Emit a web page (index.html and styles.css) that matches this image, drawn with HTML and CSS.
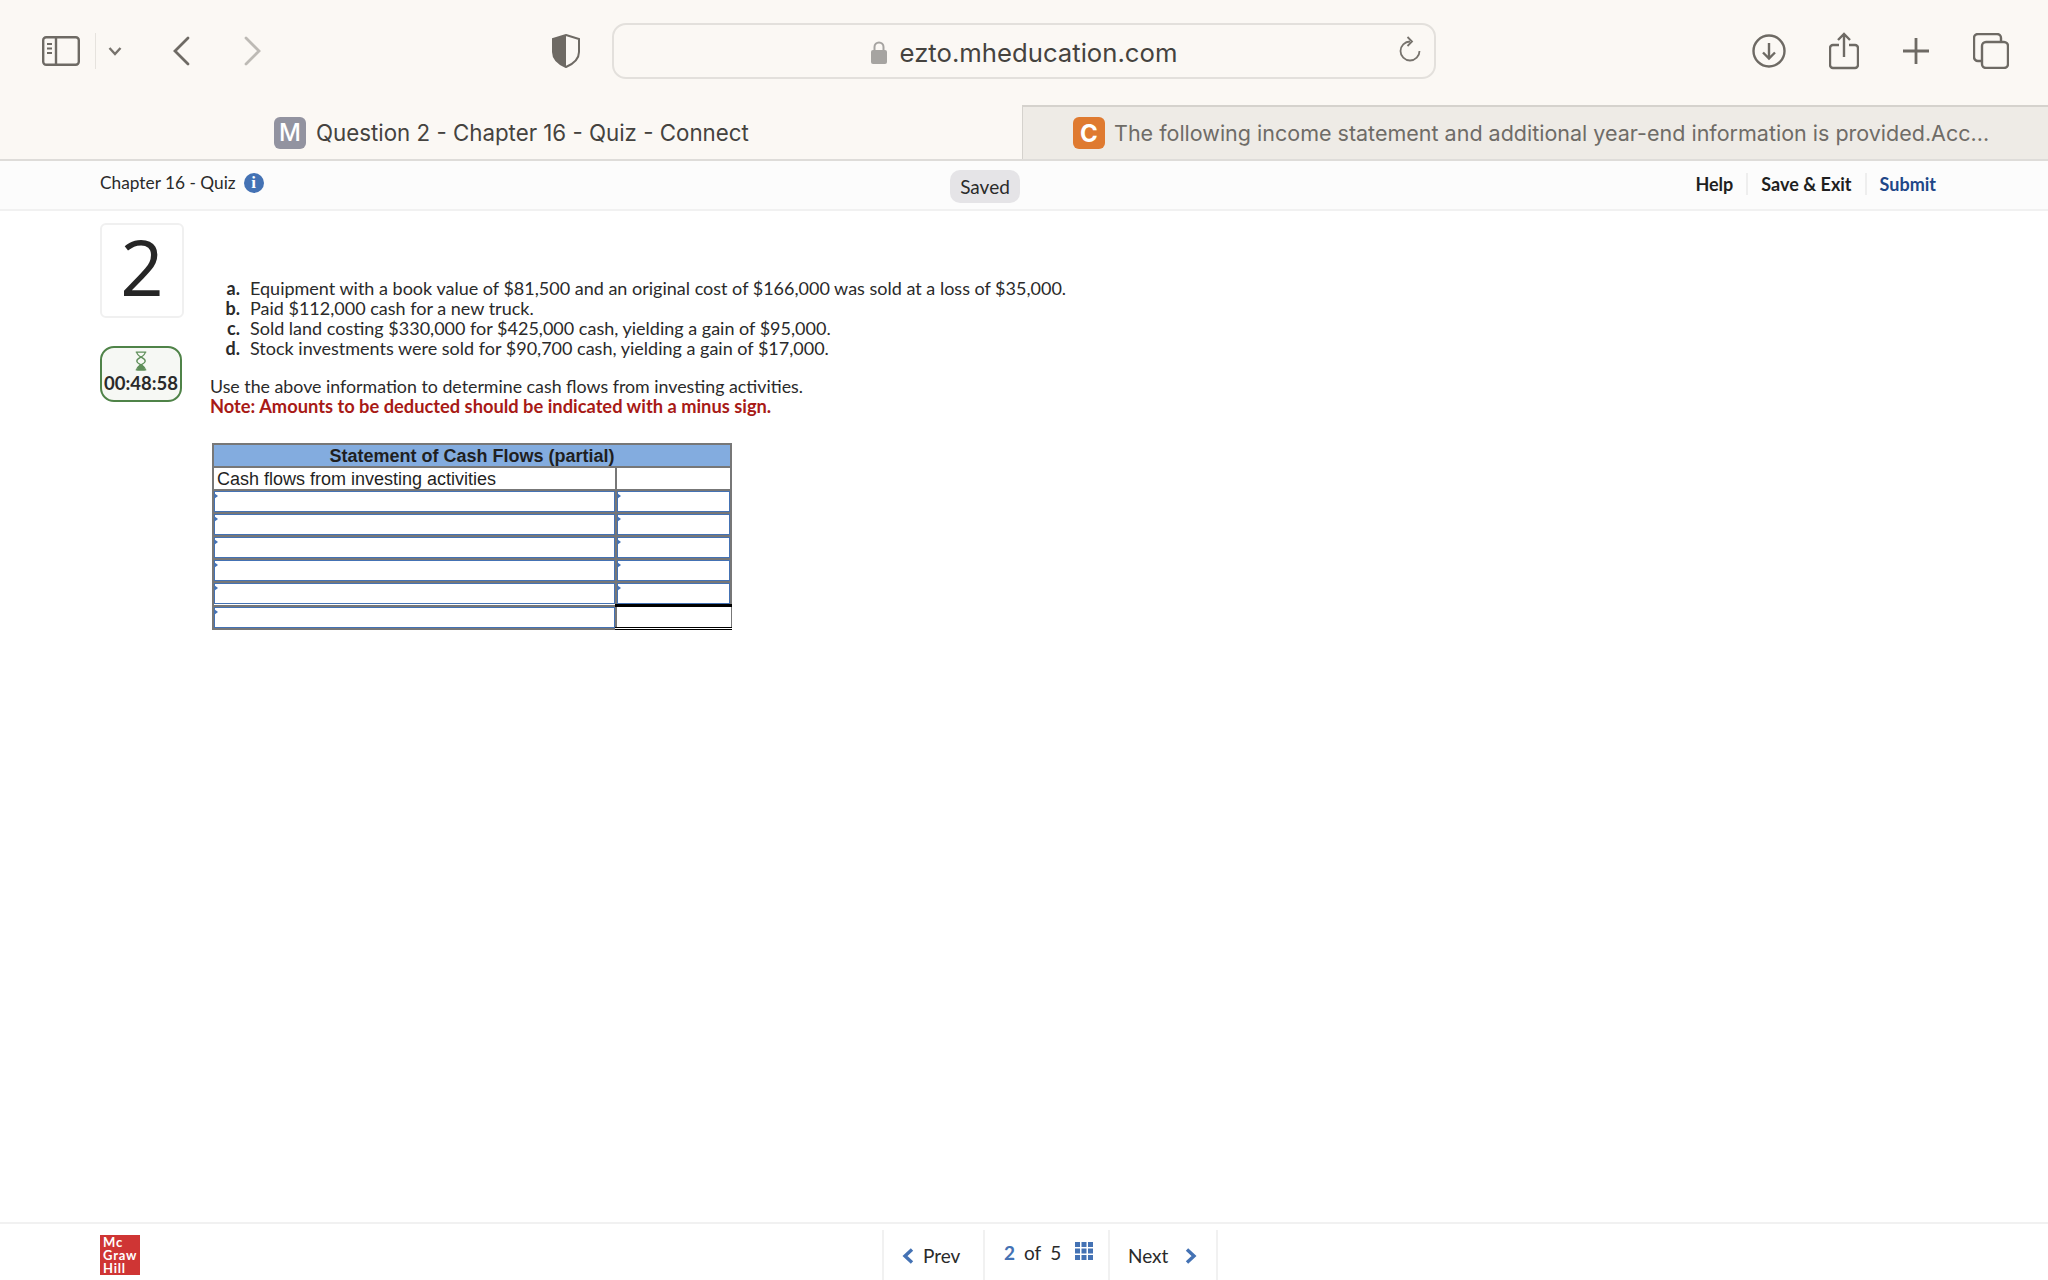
FILE: index.html
```html
<!DOCTYPE html>
<html lang="en">
<head>
  <meta charset="UTF-8">
  <title>Question 2 - Chapter 16 - Quiz - Connect</title>
  <link rel="stylesheet" href="styles.css">
</head>
<body>
  <!-- Browser toolbar -->
  <div class="toolbar">
    <svg class="ico-sidebar" width="38" height="30" viewBox="0 0 38 30" fill="none" stroke="#6e6a64" stroke-width="2.4"><rect x="1.2" y="1.2" width="35.6" height="27.6" rx="3"/><path d="M14 1v28"/><path d="M5 8h5M5 12.500h5M5 17h5" stroke-width="1.800"/></svg>
    <span class="tool-divider"></span>
    <svg class="ico-caret" width="14" height="10" viewBox="0 0 14 10" fill="none" stroke="#77736d" stroke-width="2.400"><path d="M1.500 2 7 8l5.500-6"/></svg>
    <svg class="ico-back" width="18" height="30" viewBox="0 0 18 30" fill="none" stroke="#6e6a64" stroke-width="2.800" stroke-linecap="round"><path d="M16 2 3 15l13 13"/></svg>
    <svg class="ico-forward" width="18" height="30" viewBox="0 0 18 30" fill="none" stroke="#bdbab5" stroke-width="2.800" stroke-linecap="round"><path d="M2 2l13 13L2 28"/></svg>
    <svg class="ico-shield" width="28" height="34" viewBox="0 0 28 34"><path d="M14 1 27 5v13c0 7-6 12-13 15C7 30 1 25 1 18V5z" fill="#fbf8f4" stroke="#6e6a64" stroke-width="2"/><path d="M14 1 1 5v13c0 7 6 12 13 15z" fill="#6e6a64"/></svg>
    <div class="address-bar">
      <svg class="ico-lock" width="16" height="23" viewBox="0 0 16 23"><path d="M3.500 10V6a4.500 4.500 0 0 1 9 0v4" fill="none" stroke="#a6a4a1" stroke-width="2"/><rect y="9" width="16" height="14" rx="2" fill="#a6a4a1"/></svg>
      <span class="address-text">ezto.mheducation.com</span>
      <svg class="ico-reload" width="22" height="26" viewBox="0 0 22 26" fill="none" stroke="#77736d" stroke-width="1.800"><path d="M11 5.500A9.500 9.500 0 1 0 20.500 15"/><path d="M8.500 1 13 5.500 8.500 10"/></svg>
    </div>
    <div class="tool-right">
      <svg width="34" height="34" viewBox="0 0 34 34" fill="none" stroke="#6e6a64" stroke-width="2.400"><circle cx="17" cy="17" r="15.500"/><path d="M17 9v15M11 18.500l6 6 6-6"/></svg>
      <svg width="30" height="38" viewBox="0 0 30 38" fill="none" stroke="#6e6a64" stroke-width="2.400"><path d="M10 13H4a3 3 0 0 0-3 3v17a3 3 0 0 0 3 3h22a3 3 0 0 0 3-3V16a3 3 0 0 0-3-3h-6"/><path d="M15 25V2M9 8l6-6 6 6"/></svg>
      <svg width="28" height="28" viewBox="0 0 28 28" fill="none" stroke="#6e6a64" stroke-width="2.800"><path d="M14 1v26M1 14h26"/></svg>
      <svg width="36" height="36" viewBox="0 0 36 36" fill="none" stroke="#6e6a64" stroke-width="2.400"><path d="M9 28H5a4 4 0 0 1-4-4V5a4 4 0 0 1 4-4h19a4 4 0 0 1 4 4v4"/><rect x="9" y="9" width="26" height="26" rx="4"/></svg>
    </div>
  </div>

  <!-- Tabs -->
  <div class="tabs">
    <div class="tab tab-active">
      <span class="favicon favicon-m">M</span>
      <span>Question 2 - Chapter 16 - Quiz - Connect</span>
    </div>
    <div class="tab tab-other">
      <span class="favicon favicon-c">C</span>
      <span>The following income statement and additional year-end information is provided.Acc...</span>
    </div>
  </div>

  <!-- Quiz header -->
  <div class="quiz-header">
    <div class="quiz-title">
      <span>Chapter 16 - Quiz</span>
      <span class="info-dot">i</span>
    </div>
    <span class="saved">Saved</span>
    <div class="quiz-links">
      <a>Help</a>
      <a>Save &amp; Exit</a>
      <a class="submit">Submit</a>
    </div>
  </div>

  <!-- Question -->
  <div class="main">
    <div class="side">
      <div class="q-number">2</div>
      <div class="timer">
        <svg width="14" height="20" viewBox="0 0 12 19" fill="none" stroke="#5f8f5a" stroke-width="1.200"><path d="M1 1h10M1 18h10M2 1c0 5 8 5 8 8.500S2 13 2 18M10 1c0 5-8 5-8 8.500S10 13 10 18"/><path d="M3 18c0-3 2-4 3-5 1 1 3 2 3 5z" fill="#5f8f5a"/></svg>
        <span>00:48:58</span>
      </div>
    </div>
    <div class="question">
      <ol class="items">
        <li><b>a.</b><span>Equipment with a book value of $81,500 and an original cost of $166,000 was sold at a loss of $35,000.</span></li>
        <li><b>b.</b><span>Paid $112,000 cash for a new truck.</span></li>
        <li><b>c.</b><span>Sold land costing $330,000 for $425,000 cash, yielding a gain of $95,000.</span></li>
        <li><b>d.</b><span>Stock investments were sold for $90,700 cash, yielding a gain of $17,000.</span></li>
      </ol>
      <p class="prompt">Use the above information to determine cash flows from investing activities.</p>
      <p class="note">Note: Amounts to be deducted should be indicated with a minus sign.</p>

      <table class="cash-table">
        <colgroup><col class="col-label"><col></colgroup>
        <tr><th colspan="2">Statement of Cash Flows (partial)</th></tr>
        <tr><td class="label">Cash flows from investing activities</td><td></td></tr>
        <tr><td class="entry"><div></div></td><td class="entry"><div></div></td></tr>
        <tr><td class="entry"><div></div></td><td class="entry"><div></div></td></tr>
        <tr><td class="entry"><div></div></td><td class="entry"><div></div></td></tr>
        <tr><td class="entry"><div></div></td><td class="entry"><div></div></td></tr>
        <tr><td class="entry"><div></div></td><td class="entry"><div></div></td></tr>
        <tr><td class="entry"><div></div></td><td class="total"></td></tr>
      </table>
    </div>
  </div>

  <!-- Footer -->
  <div class="footer">
    <div class="logo">Mc<br>Graw<br>Hill</div>
    <div class="pager">
      <div class="pager-cell pager-prev">
        <svg width="12" height="16" viewBox="0 0 12 16" fill="none" stroke="#4472b4" stroke-width="3.400"><path d="M10 1.500 3 8l7 6.500"/></svg>
        <span>Prev</span>
      </div>
      <div class="pager-cell pager-count">
        <b>2</b><span>of</span><span>5</span>
        <svg width="18" height="18" viewBox="0 0 18 18" fill="#4472b4"><rect width="5" height="5"/><rect x="6.500" width="5" height="5"/><rect x="13" width="5" height="5"/><rect y="6.500" width="5" height="5"/><rect x="6.500" y="6.500" width="5" height="5"/><rect x="13" y="6.500" width="5" height="5"/><rect y="13" width="5" height="5"/><rect x="6.500" y="13" width="5" height="5"/><rect x="13" y="13" width="5" height="5"/></svg>
      </div>
      <div class="pager-cell pager-next">
        <span>Next</span>
        <svg width="12" height="16" viewBox="0 0 12 16" fill="none" stroke="#4472b4" stroke-width="3.400"><path d="M2 1.500 9 8l-7 6.500"/></svg>
      </div>
    </div>
  </div>
</body>
</html>
```

FILE: styles.css
```css
* {
  box-sizing: border-box;
}

html, body {
  margin: 0;
  padding: 0;
}

body {
  display: flex;
  flex-direction: column;
  width: 2048px;
  height: 1280px;
  overflow: hidden;
  background: #ffffff;
  color: #2a2a2a;
  font-family: Lato, "Open Sans", sans-serif;
}

/* Browser toolbar */
.toolbar {
  display: flex;
  align-items: center;
  height: 105px;
  padding: 0 39px 3px 42px;
  background: #fbf8f4;
}

.tool-divider {
  width: 1px;
  height: 36px;
  margin-left: 15px;
  background: #e6e3de;
}

.ico-caret {
  margin-left: 12px;
}

.ico-back {
  margin-left: 50px;
}

.ico-forward {
  margin-left: 54px;
}

.ico-shield {
  margin-left: 290px;
}

.address-bar {
  display: flex;
  align-items: center;
  position: relative;
  justify-content: center;
  width: 824px;
  height: 56px;
  margin-left: 32px;
  padding-top: 2px;
  border: 2px solid #e3e0dc;
  border-radius: 14px;
}

.ico-lock {
  margin-right: 13px;
}

.address-text {
  font-family: Inter, sans-serif;
  font-size: 25.700px;
  color: #45433f;
}

.ico-reload {
  position: absolute;
  right: 13px;
  top: 11px;
}

.tool-right {
  display: flex;
  align-items: center;
  gap: 43px;
  margin-left: auto;
}

/* Tabs */
.tabs {
  display: flex;
  height: 56px;
  font-family: Inter, sans-serif;
  font-size: 22.300px;
  white-space: nowrap;
  border-bottom: 2px solid #dedcd9;
}

.tab {
  display: flex;
  align-items: center;
  padding-top: 1px;
}

.tab-active {
  width: 1022px;
  padding-left: 274px;
  gap: 10px;
  background: #fbf8f4;
  color: #45433f;
}

.tab-other {
  flex: 1;
  padding-top: 0;
  padding-left: 50px;
  gap: 9px;
  background: #eeebe6;
  color: #6f6c67;
  font-size: 21.500px;
  border-top: 2px solid #d5d2cd;
  border-left: 1px solid #d5d2cd;
}

.favicon {
  display: flex;
  align-items: center;
  justify-content: center;
  width: 32px;
  height: 32px;
  border-radius: 6px;
  color: #ffffff;
  font-size: 24px;
  font-weight: 500;
}

.favicon-m {
  background: #9293a0;
}

.favicon-c {
  background: #df7a30;
  font-weight: 700;
}

/* Quiz header */
.quiz-header {
  display: flex;
  align-items: center;
  height: 50px;
  padding: 0 112px 0 100px;
  background: #fcfcfc;
  border-bottom: 2px solid #f1f1f1;
}

.quiz-title {
  display: flex;
  align-items: center;
  gap: 8px;
  width: 850px;
  margin-bottom: 5px;
  font-size: 17.300px;
  color: #2a2a2a;
}

.info-dot {
  display: flex;
  align-items: center;
  justify-content: center;
  width: 20px;
  height: 20px;
  border-radius: 50%;
  background: #4472b4;
  color: #ffffff;
  font-family: "Liberation Serif", serif;
  font-size: 17px;
  font-weight: 700;
}

.saved {
  width: 70px;
  height: 33px;
  margin-top: 2px;
  border-radius: 10px;
  background: #e5e4e7;
  font-size: 19px;
  line-height: 33px;
  text-align: center;
  color: #2a2a2a;
}

.quiz-links {
  display: flex;
  align-items: center;
  margin-left: auto;
  margin-bottom: 3px;
  font-size: 18px;
  font-weight: 700;
  color: #1f1f1f;
}

.quiz-links a {
  padding: 0 13px;
  line-height: 22px;
  border-right: 2px solid #eeeeee;
}

.quiz-links a.submit {
  padding-right: 0;
  border-right: none;
  color: #1f4788;
}

/* Question */
.main {
  display: flex;
  flex: 1;
  padding: 12px 0 0 100px;
}

.side {
  display: flex;
  flex-direction: column;
  width: 110px;
}

.q-number {
  width: 84px;
  height: 95px;
  border: 2px solid #f0f0f0;
  border-radius: 6px;
  font-family: "Open Sans", sans-serif;
  font-size: 76px;
  font-weight: 500;
  line-height: 84px;
  text-align: center;
  color: #262626;
}

.timer {
  display: flex;
  flex-direction: column;
  align-items: center;
  width: 82px;
  height: 56px;
  margin-top: 28px;
  padding-top: 3px;
  border: 2px solid #4f8348;
  border-radius: 14px;
  background: #f6f8f4;
  font-size: 18.500px;
  font-weight: 700;
  line-height: 24px;
  color: #2a2a2a;
}

.question {
  font-size: 18px;
  line-height: 20px;
  color: #2a2a2a;
}

.items {
  list-style: none;
  margin: 0;
  padding: 55px 0 0 0;
}

.items li {
  display: flex;
}

.items b {
  width: 30px;
  margin-right: 10px;
  text-align: right;
}

.prompt {
  margin: 18px 0 0 0;
  font-size: 17.800px;
}

.note {
  margin: 0;
  font-size: 18.300px;
  font-weight: 700;
  color: #a81a16;
}

/* Cash flow table */
.cash-table {
  width: 520px;
  margin: 27px 0 0 2px;
  border-collapse: collapse;
  table-layout: fixed;
  font-family: "Liberation Sans", sans-serif;
  font-size: 18px;
  line-height: 20px;
  color: #1f1f1f;
}

.col-label {
  width: 403px;
}

.cash-table th {
  height: 23px;
  padding: 0;
  background: #83acdf;
  border: 2px solid #777777;
  font-weight: 700;
}

.cash-table td {
  height: 23px;
  padding: 0;
  border: 2px solid #777777;
}

.cash-table .label {
  padding-left: 3px;
}

.entry div {
  position: relative;
  height: 21px;
  border: 1px solid #4472b4;
}

/* little marker in the corner of an input cell */
.entry div::before {
  content: "";
  position: absolute;
  left: -1px;
  top: 1px;
  border-left: 4px solid #4472b4;
  border-top: 3px solid transparent;
  border-bottom: 3px solid transparent;
}

.cash-table .total {
  border-top: 3px solid #000000;
  border-right: 1px solid #777777;
  border-bottom: 3px double #000000;
}

/* Footer */
.footer {
  display: flex;
  height: 58px;
  padding-left: 100px;
  border-top: 2px solid #f1f1f1;
}

.logo {
  width: 40px;
  height: 40px;
  margin-top: 11px;
  padding: 1px 0 0 3px;
  background: #cf3534;
  color: #ffffff;
  font-size: 13px;
  font-weight: 700;
  letter-spacing: 0.800px;
  line-height: 13px;
}

.pager {
  display: flex;
  height: 50px;
  margin: 6px 0 0 742px;
  border-left: 2px solid #f1f1f1;
  font-size: 19px;
  color: #2a2a2a;
}

.pager-cell {
  display: flex;
  align-items: center;
  border-right: 2px solid #f1f1f1;
}

.pager-prev {
  width: 101px;
  gap: 9px;
  padding: 1px 0 0 18px;
}

.pager-count {
  width: 125px;
  gap: 9px;
  padding: 0 0 6px 19px;
}

.pager-count b {
  color: #4472b4;
}

.pager-count svg {
  margin: 0 0 2px 5px;
}

.pager-next {
  width: 108px;
  gap: 17px;
  padding: 1px 0 0 18px;
}
```
